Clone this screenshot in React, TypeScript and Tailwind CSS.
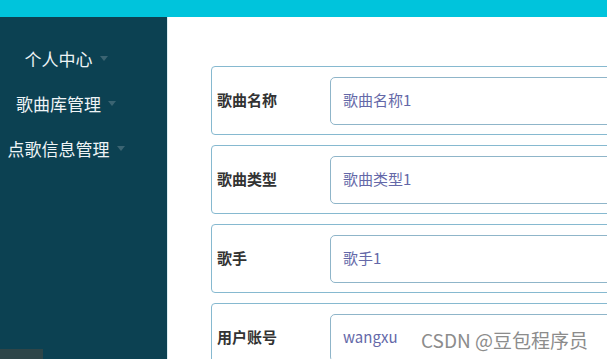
import React from "react";

const menus = ["个人中心", "歌曲库管理", "点歌信息管理"];

const fields = [
  { label: "歌曲名称", value: "歌曲名称1" },
  { label: "歌曲类型", value: "歌曲类型1" },
  { label: "歌手", value: "歌手1" },
  { label: "用户账号", value: "wangxu" },
];

const font = { fontFamily: '"Noto Sans CJK SC", "Noto Sans", sans-serif' };

export default function App() {
  return (
    <div className="relative w-[607px] h-[359px] overflow-hidden bg-white" style={font}>
      <div className="h-[17px] bg-[#00c4dc]" />
      <div className="flex h-[342px]">
        <aside className="relative w-[168px] shrink-0 bg-[#0c4152] border-r border-[#dceef3] pt-[19px]">
          {menus.map((m) => (
            <div key={m} className="w-[132px] h-[45px] flex items-center justify-center gap-[7px]">
              <span className="text-[17px] leading-none text-[#eef4f6]">{m}</span>
              <span className="w-0 h-0 border-l-[4px] border-r-[4px] border-t-[5px] border-l-transparent border-r-transparent border-t-[#3b6472]" />
            </div>
          ))}
          <div className="absolute left-0 bottom-0 w-[43px] h-[10px] bg-[#2e4548]" />
        </aside>
        <main className="flex-1 pt-[49px] pl-[43px] flex flex-col gap-[10px]">
          {fields.map((f) => (
            <div
              key={f.label}
              className="h-[69px] shrink-0 -mr-[10px] rounded-[4px] border border-[#86b9d0] flex items-center pl-[5px]"
            >
              <div className="w-[113px] text-[15px] font-bold text-[#333333]">{f.label}</div>
              <div className="flex-1 h-[48px] rounded-[5px] border border-[#8fb5c9] flex items-center pl-[12px] text-[15px] text-[#6468a8]">
                {f.value}
              </div>
            </div>
          ))}
        </main>
      </div>
      <div className="absolute left-[421px] top-[326px] text-[19px] text-[#8c8c8c]">CSDN @豆包程序员</div>
    </div>
  );
}
